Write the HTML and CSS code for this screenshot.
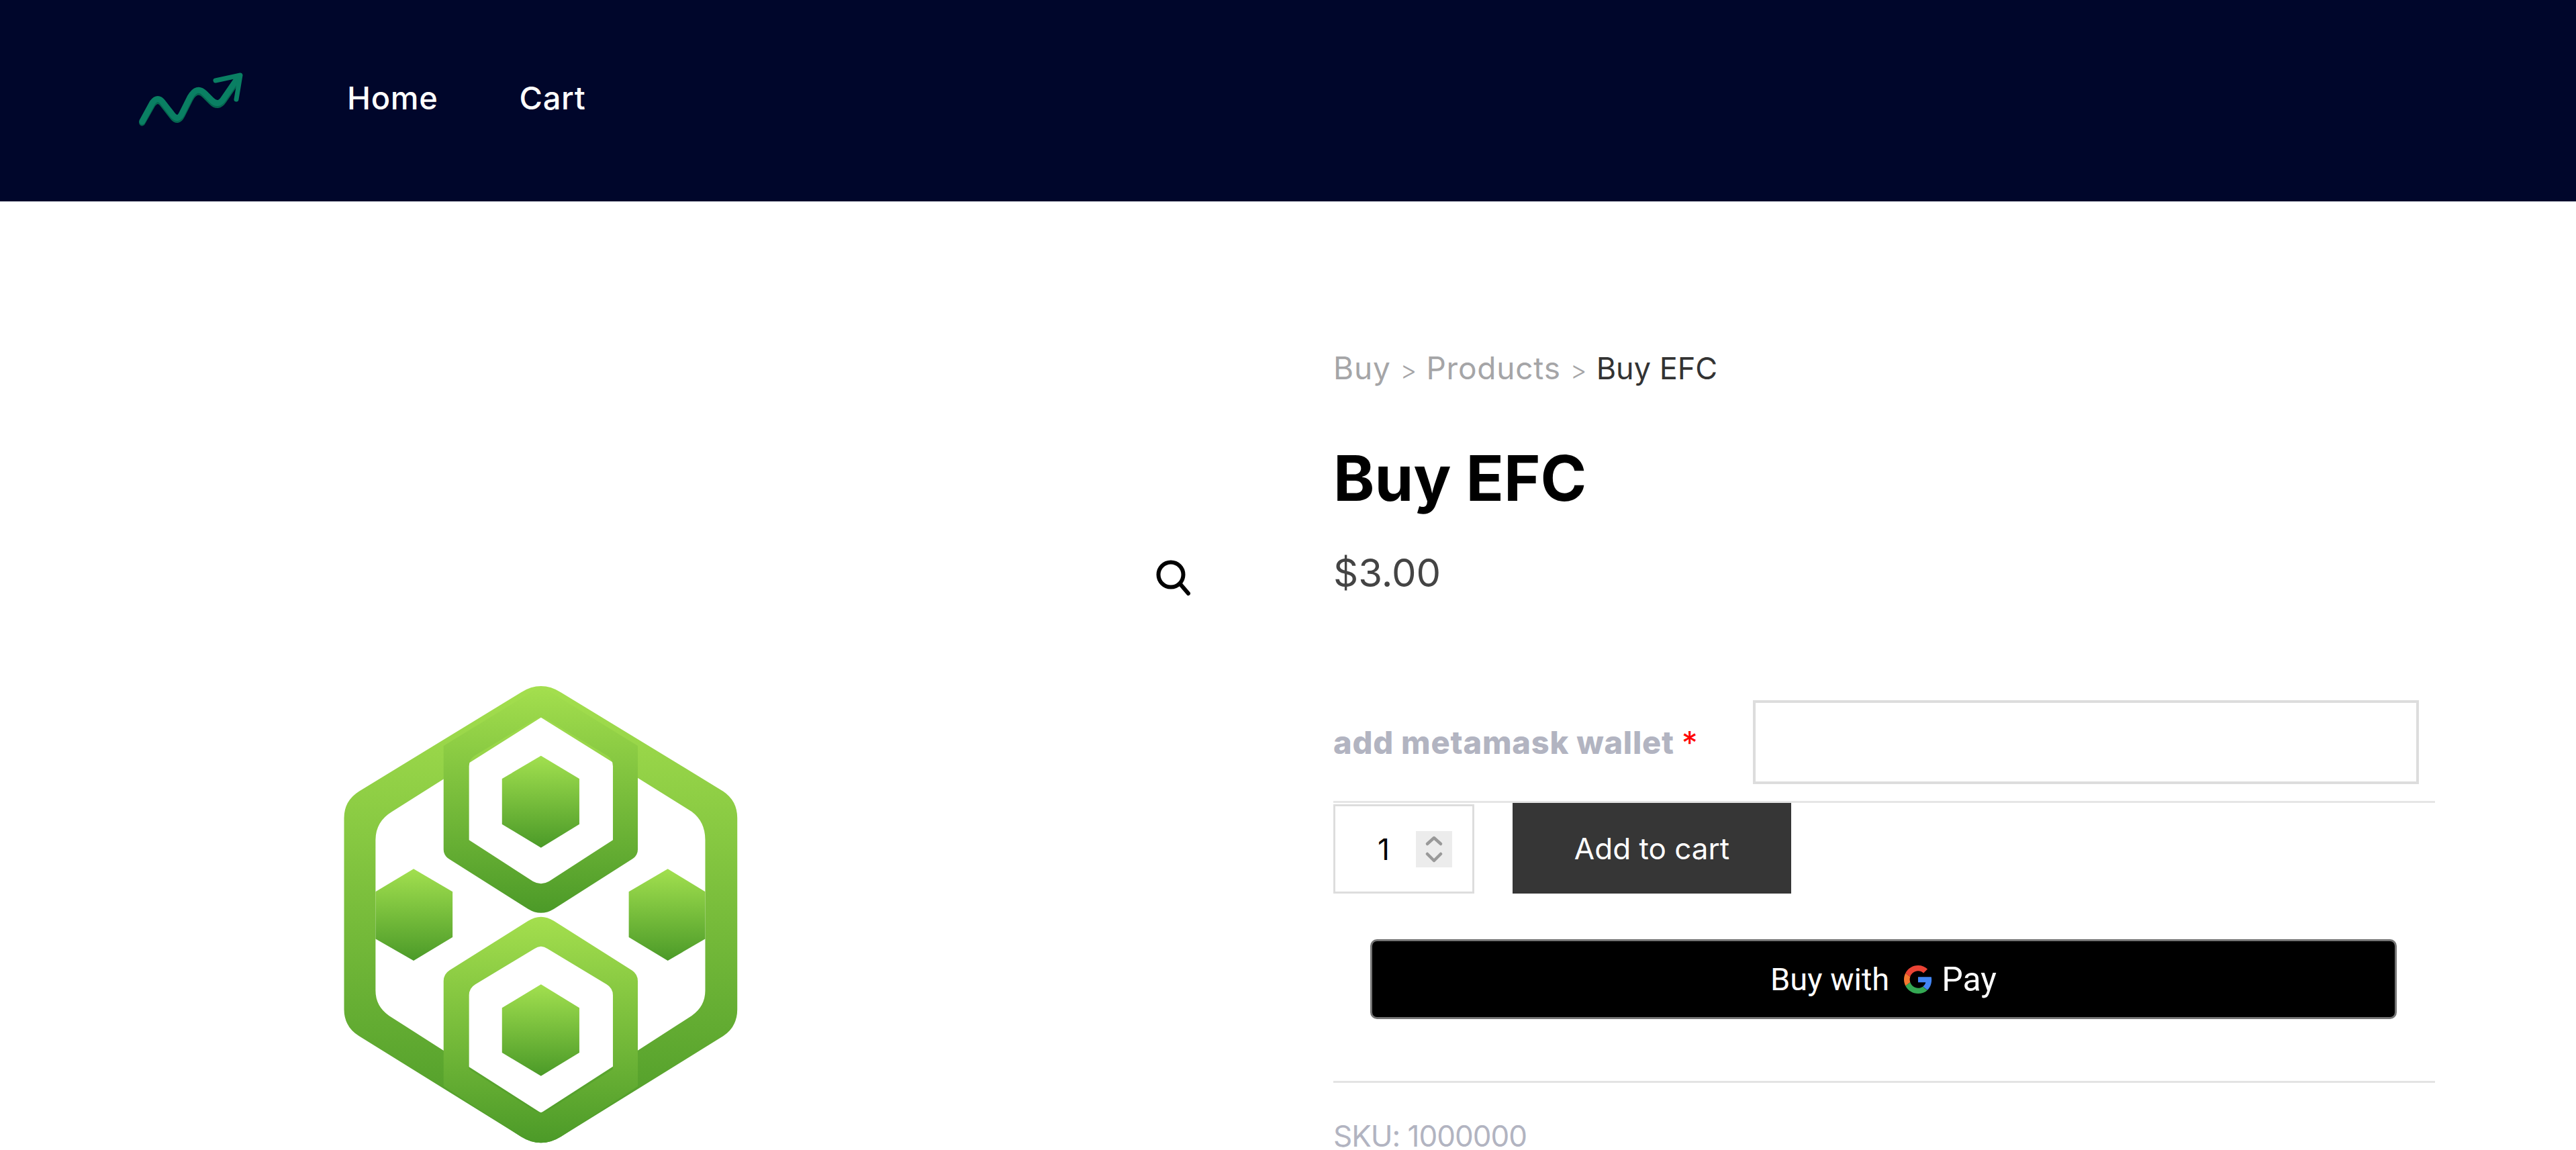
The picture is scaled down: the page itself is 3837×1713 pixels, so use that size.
FILE: index.html
```html
<!DOCTYPE html>
<html lang="en">
<head>
<meta charset="utf-8">
<title>Buy EFC</title>
<link rel="stylesheet" href="styles.css">
</head>
<body>
<header class="site-header">
  <svg class="logo" viewBox="0 0 155 76" aria-hidden="true">
    <path class="logo-shade" d="M4.700 74 L20 47 Q28 36 36 47 L50 65 Q58 75 64 63 L76 39 Q86 21 98 33 L108 43 Q118 53 126 41 L146 12"/>
    <path class="logo-line" d="M4.700 72 L20 44 Q28 33 36 44 L50 62 Q58 72 64 60 L76 36 Q86 18 98 30 L108 40 Q118 50 126 38 L148 6"/>
    <path class="logo-head" d="M114 11 L151 3 L145 39"/>
  </svg>
  <nav class="main-nav">
    <a class="nav-link" href="#">Home</a>
    <a class="nav-link" href="#">Cart</a>
  </nav>
</header>
<main class="product">
  <section class="gallery">
    <svg class="zoom-icon" viewBox="0 0 56 60" aria-hidden="true">
      <circle cx="24" cy="24" r="18.5"/>
      <path d="M38 38 L50 52"/>
    </svg>
    <svg class="emblem" viewBox="0 0 1568 1568" preserveAspectRatio="none" aria-hidden="true">
      <defs>
        <linearGradient id="gRing" gradientUnits="userSpaceOnUse" x1="0" y1="90" x2="0" y2="1545"><stop offset="0" stop-color="#a4df4e"/><stop offset="1" stop-color="#4c9a28"/></linearGradient>
        <linearGradient id="gTop" gradientUnits="userSpaceOnUse" x1="0" y1="90" x2="0" y2="812"><stop offset="0" stop-color="#a4df4e"/><stop offset="1" stop-color="#4c9a28"/></linearGradient>
        <linearGradient id="gLow" gradientUnits="userSpaceOnUse" x1="0" y1="825" x2="0" y2="1545"><stop offset="0" stop-color="#a4df4e"/><stop offset="1" stop-color="#4c9a28"/></linearGradient>
        <linearGradient id="gCell" x1="0" y1="0" x2="0" y2="1"><stop offset="0" stop-color="#a2e04f"/><stop offset="1" stop-color="#4b9a28"/></linearGradient>
      </defs>
      <path fill="url(#gRing)" fill-rule="evenodd" d="M730 110 Q797 70 864 110 L1405 425 Q1452 455 1452 510 L1452 1120 Q1452 1175 1405 1205 L864 1525 Q797 1565 730 1525 L190 1205 Q140 1175 140 1120 L140 510 Q140 455 190 425 Z M797 190 L300 490 Q245 522 245 580 L245 1060 Q245 1110 290 1140 L797 1450 L1300 1140 Q1345 1110 1345 1060 L1345 580 Q1345 522 1300 490 Z"/>
      <path fill="url(#gCell)" d="M372 672 L502 745 L502 890 L372 965 L245 895 L245 745 Z"/>
      <path fill="url(#gCell)" d="M1220 672 L1090 745 L1090 890 L1220 965 L1345 895 L1345 745 Z"/>
      <path fill="url(#gTop)" fill-rule="evenodd" d="M797 90 L1120 280 L1120 610 Q1120 630 1100 642 L840 800 Q797 825 754 800 L492 642 Q472 630 472 610 L472 280 Z M775 197 L578 310 Q557 322 557 345 L557 580 L770 712 Q797 727 824 712 L1037 580 L1037 345 Q1037 322 1016 310 L819 197 Q797 182 775 197 Z"/>
      <path fill="url(#gCell)" d="M797 312 L925 385 L925 530 L797 605 L667 530 L667 385 Z"/>
      <path fill="url(#gLow)" fill-rule="evenodd" d="M754 838 Q797 812 840 838 L1100 995 Q1120 1007 1120 1030 L1120 1365 L864 1525 Q797 1565 730 1525 L472 1365 L472 1030 Q472 1007 492 995 Z M775 927 L578 1040 Q557 1052 557 1075 L557 1310 L770 1440 Q797 1456 824 1440 L1037 1310 L1037 1075 Q1037 1052 1016 1040 L819 927 Q797 912 775 927 Z"/>
      <path fill="url(#gCell)" d="M797 1040 L925 1115 L925 1258 L797 1332 L667 1258 L667 1115 Z"/>
    </svg>
  </section>
  <section class="summary">
    <nav class="crumbs">
      <a class="crumb" href="#">Buy</a>
      <span class="crumb-sep">&gt;</span>
      <a class="crumb" href="#">Products</a>
      <span class="crumb-sep">&gt;</span>
      <span class="crumb-current">Buy EFC</span>
    </nav>
    <h1 class="title">Buy EFC</h1>
    <p class="price">$3.00</p>
    <form class="cart-form">
      <div class="field-row">
        <label class="field-label" for="wallet">add metamask wallet <span class="req">*</span></label>
        <input class="field-input" id="wallet" type="text">
      </div>
      <div class="buy-row">
        <div class="qty">
          <span class="qty-value">1</span>
          <span class="spinner">
            <svg viewBox="0 0 54 54" aria-hidden="true"><path d="M17 19 L27 10 L37 19"/><path d="M17 34 L27 44 L37 34"/></svg>
          </span>
        </div>
        <button class="add-btn" type="button">Add to cart</button>
      </div>
      <button class="gpay" type="button">
        <span class="gpay-buy">Buy with</span>
        <svg class="g-mark" viewBox="0 0 48 48" aria-hidden="true">
          <path fill="#4285f4" d="M47 24.5c0-1.700-.15-3.300-.43-4.800H24v9.100h12.900c-.56 3-2.240 5.500-4.780 7.200l7.700 6C44.300 37.900 47 31.800 47 24.500z"/>
          <path fill="#34a853" d="M24 48c6.500 0 11.900-2.150 15.800-5.800l-7.700-6c-2.150 1.440-4.900 2.300-8.100 2.300-6.200 0-11.500-4.200-13.400-9.900l-8 6.200C6.600 42.700 14.700 48 24 48z"/>
          <path fill="#f4772f" d="M10.600 28.600c-.5-1.440-.77-3-.77-4.600s.27-3.160.77-4.600l-8-6.200C1 16.400 0 20.100 0 24s1 7.600 2.600 10.800z"/>
          <path fill="#ea4335" d="M24 9.500c3.500 0 6.700 1.200 9.200 3.600l6.900-6.900C35.900 2.300 30.500 0 24 0 14.700 0 6.600 5.300 2.600 13.200l8 6.200C12.500 13.700 17.800 9.500 24 9.500z"/>
        </svg>
        <span class="gpay-pay">Pay</span>
      </button>
      <hr class="rule">
      <p class="sku">SKU: 1000000</p>
    </form>
  </section>
</main>
</body>
</html>
```
FILE: styles.css
```css
* { box-sizing: border-box; }
html, body { margin: 0; padding: 0; height: 100%; overflow: hidden; background: #fff; }
body { font-family: Inter, "Liberation Sans", sans-serif; color: #333; }
a { text-decoration: none; color: inherit; }

.site-header { height: 300px; background: #00062b; display: flex; align-items: flex-start; padding: 109px 0 0 207px; }
.logo { width: 155px; height: 76px; flex: none; display: block; overflow: visible; }
.logo-shade { fill: none; stroke: #05664f; stroke-width: 9; stroke-linecap: round; stroke-linejoin: round; }
.logo-line { fill: none; stroke: #0a7f63; stroke-width: 9; stroke-linecap: round; stroke-linejoin: round; }
.logo-head { fill: none; stroke: #0a7f63; stroke-width: 7; stroke-linecap: round; stroke-linejoin: round; }
.main-nav { display: flex; gap: 121px; margin-left: 155px; padding-top: 10px; }
.nav-link { color: #fff; font-size: 47px; line-height: 54px; font-weight: 500; letter-spacing: 0.7px; }

.product { display: flex; }
.gallery { position: relative; width: 1986px; flex: none; height: 1413px; padding: 680px 0 0 450px; }
.emblem { display: block; width: 700px; height: 733px; }
.zoom-icon { position: absolute; left: 1720px; top: 532px; width: 56px; height: 60px; fill: none; stroke: #000; stroke-width: 6; stroke-linecap: round; }

.summary { width: 1641px; flex: none; padding-top: 218px; }
.crumbs { display: flex; align-items: baseline; gap: 14px; font-size: 46px; line-height: 60px; color: #a5a5a7; }
.crumb { letter-spacing: 0.8px; }
.crumb-sep { font-size: 38px; font-weight: 300; }
.crumb-current { color: #333; font-size: 45px; }
.title { margin: 75px 0 0; font-size: 93px; line-height: 112px; font-weight: 700; color: #000; }
.price { margin: 50px 0 0; font-size: 58px; line-height: 70px; color: #444; font-weight: 400; }

.cart-form { margin-top: 155px; }
.field-row { display: flex; align-items: center; height: 125px; margin-bottom: 25px; }
.field-label { width: 625px; flex: none; font-size: 47px; font-weight: 800; letter-spacing: 0.8px; color: #b2b4c1; }
.req { color: #f00; font-weight: 400; }
.field-input { width: 992px; height: 125px; border: 4px solid #ddd; background: #fff; outline: none; }
.buy-row { display: flex; gap: 57px; align-items: stretch; border-top: 3px solid #e5e5e5; height: 138px; }
.qty { width: 210px; margin-top: 2px; border: 3px solid #ddd; display: flex; align-items: center; padding-left: 63px; }
.qty-value { width: 57px; font-size: 44px; color: #000; font-weight: 400; }
.spinner { width: 54px; height: 54px; background: #ececec; display: block; }
.spinner svg { display: block; width: 54px; height: 54px; fill: none; stroke: #999; stroke-width: 4.5; stroke-linecap: round; stroke-linejoin: round; }
.add-btn { width: 415px; border: 0; border-radius: 0; background: #363636; color: #fff; font: 400 44px Inter, "Liberation Sans", sans-serif; padding: 0; }

.gpay { display: flex; align-items: center; justify-content: center; width: 1529px; height: 119px; margin: 68px 0 0 55px; background: #000; border: 3px solid #757575; border-radius: 10px; color: #fff; padding: 0; font-family: Roboto, sans-serif; }
.gpay-buy { font-size: 47px; font-weight: 400; margin-right: 22px; }
.g-mark { width: 42px; height: 42px; flex: none; margin-right: 14px; }
.gpay-pay { font-size: 50px; font-weight: 400; }

.rule { margin: 92px 0 0; border: 0; border-top: 3px solid #e3e3e3; }
.sku { margin: 60px 0 0; font-size: 44px; line-height: 38px; letter-spacing: -1px; color: #b2b4c1; }
```
